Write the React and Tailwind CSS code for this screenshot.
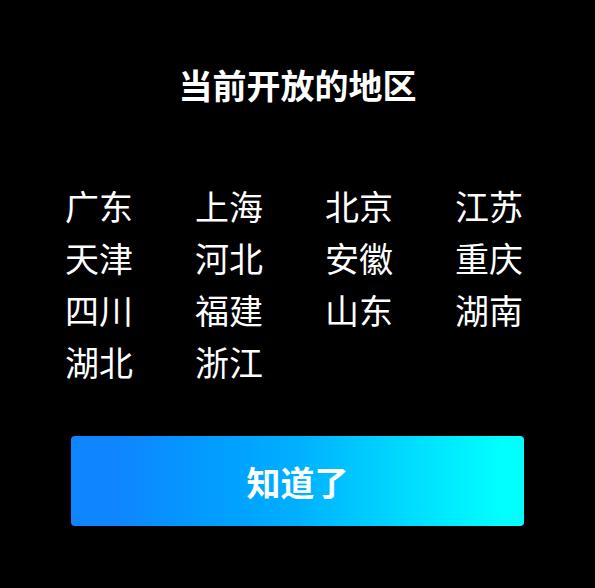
export default function App() {
  const regions = ["广东","上海","北京","江苏","天津","河北","安徽","重庆","四川","福建","山东","湖南","湖北","浙江"];
  return (
    <div className="w-[595px] h-[588px] bg-black text-white flex flex-col items-center" style={{fontFamily: '"Noto Sans CJK SC", "Noto Sans", sans-serif'}}>
      <div className="mt-[63px] h-[44px] flex items-center text-[34px] font-bold leading-none">当前开放的地区</div>
      <div className="mt-[77px] w-[520px] pl-[65px] self-start grid grid-cols-[130px_130px_130px_130px] gap-y-[8px]">
        {regions.map((r) => (
          <div key={r} className="h-[44px] flex items-center text-[34px] leading-none">{r}</div>
        ))}
      </div>
      <div className="mt-[52px] w-[453px] h-[90px] rounded-[4px] bg-gradient-to-r from-[#0f85ff] from-[10%] via-[#00b0ff] to-[#00ffff] to-[95%] flex items-center justify-center text-[34px] font-bold">知道了</div>
    </div>
  );
}
